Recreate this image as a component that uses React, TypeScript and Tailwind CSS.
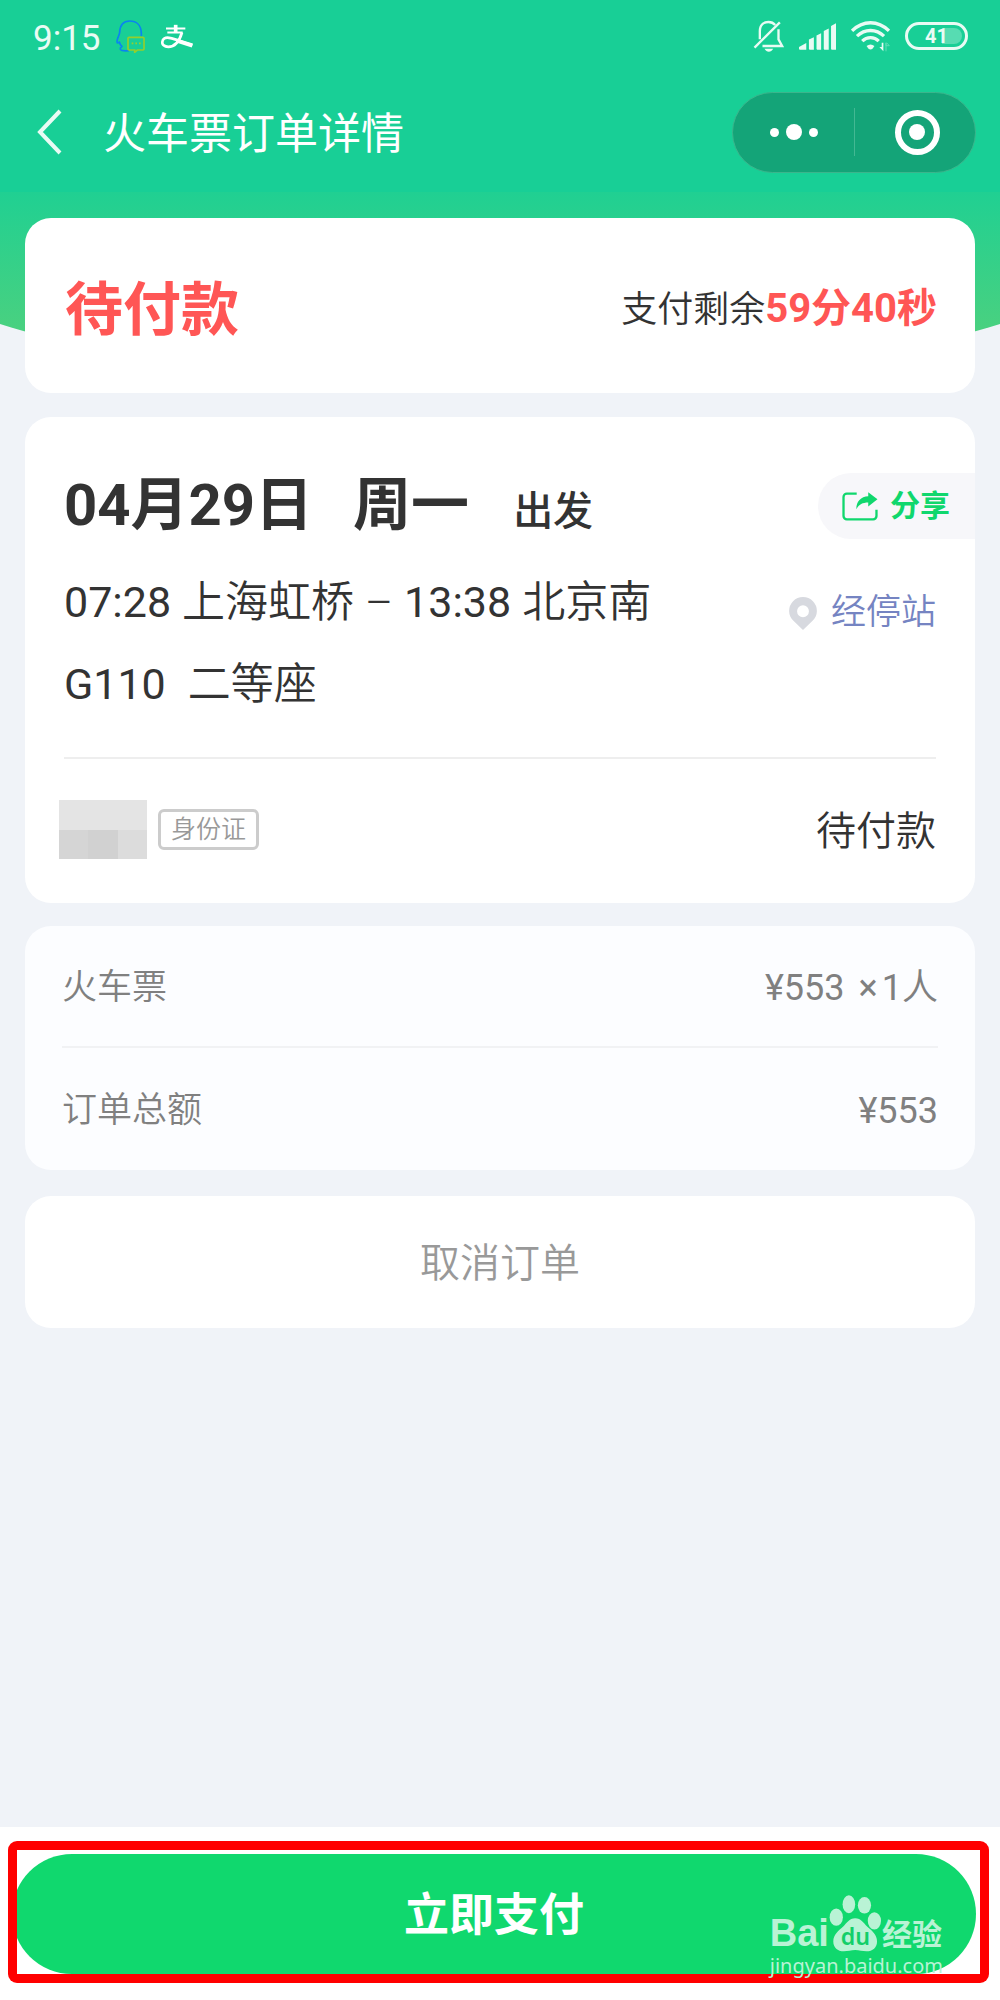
import React from 'react';

const QQIcon: React.FC = () => (
  <svg viewBox="0 0 90 102" className="h-[34px] w-[30px]" fill="none">
    <path
      d="M79 52V42C78 18 64 6 44 6S15 18 14 40c0 8-8 16-8 28 0 5 3 5 7 1 1 6 4 10 8 13-4 3-7 5-5 9 3 5 14 5 26 4"
      stroke="#0a84f0"
      strokeWidth="5"
      strokeLinejoin="round"
    />
    <path
      d="M42 55h42a3 3 0 0 1 3 3v32a3 3 0 0 1-3 3H67l-8 7v-7H42a3 3 0 0 1-3-3V58a3 3 0 0 1 3-3Z"
      fill="#18cf96"
      stroke="#93cf2c"
      strokeWidth="5"
    />
    <path d="M50 73h5M61 73h5M72 73h5" stroke="#93cf2c" strokeWidth="5" />
  </svg>
);

const AlipayIcon: React.FC = () => (
  <svg viewBox="0 0 96 74" className="h-[25px] w-8" fill="none" stroke="#fff">
    <path d="M44 2v24" strokeWidth="11" />
    <path d="M15 13h58M19 25h46" strokeWidth="6" />
    <path d="M63 25C57 45 44 68 22 68 9 68 3 61 4 53c1-9 9-14 20-12 24 4 46 15 70 22" strokeWidth="8" />
    <path d="M52 51 94 64" strokeWidth="12" />
  </svg>
);

const MuteIcon: React.FC = () => (
  <svg viewBox="0 0 92 96" className="h-8 w-[31px]" fill="none" stroke="#e9fbf4" strokeWidth="7">
    <path d="M20 58V34C20 16 31 6 46 6c8 0 15 3 20 9M76 28v30l11 20H28" />
    <path d="M4 83 80 7" />
    <path d="M34 86h26c-3 6-8 9-13 9s-10-3-13-9Z" fill="#e9fbf4" stroke="none" />
  </svg>
);

const SignalIcon: React.FC = () => (
  <svg viewBox="0 0 112 80" className="h-[27px] w-[37px]" fill="#e9fbf4">
    <path d="M0 78v-6l22-12v20H2ZM30 49l15-7v38H32l-2-2ZM53 37l14-7v50H55l-2-2ZM75 23l15-7v64H77l-2-2ZM97 8l15-8v80H99l-2-2Z" />
  </svg>
);

const WifiIcon: React.FC = () => (
  <svg viewBox="0 0 118 94" className="h-[31px] w-[39px]" fill="none" stroke="#e9fbf4" strokeWidth="10">
    <path d="M3 30C36-3 82-3 115 30M18 46c24-23 58-23 82 0M34 61c14-14 36-14 50 0" />
    <path d="M47 76q12-10 24 0l-6 8q-6 5-12 0Z" fill="#e9fbf4" stroke="none" />
    <path d="M98 66v26L86 79h7V66Z" fill="#e9fbf4" stroke="none" />
    <path d="M106 92V66v9h10l-8-9" stroke="#5fdfb6" strokeWidth="3" />
  </svg>
);

const ShareIcon: React.FC = () => (
  <svg viewBox="0 0 108 88" className="h-[29px] w-9" fill="none">
    <path d="M44 5H14a10 10 0 0 0-10 10v58a10 10 0 0 0 10 10h80a10 10 0 0 0 10-10V54" stroke="#10d76d" strokeWidth="7" />
    <path d="M79 1 107 22 79 44V32C62 32 51 38 43 52 42 29 57 14 79 13Z" fill="#10d76d" />
  </svg>
);

const PinIcon: React.FC = () => (
  <svg viewBox="0 0 84 100" className="h-[33px] w-7">
    <path
      d="M42 0a42 42 0 0 1 42 43c0 12-5 21-13 29L42 100 13 72C5 64 0 55 0 43A42 42 0 0 1 42 0Zm0 25a18 18 0 1 0 0 36 18 18 0 0 0 0-36Z"
      fill="#d7d9df"
      fillRule="evenodd"
    />
  </svg>
);

const PawIcon: React.FC = () => (
  <svg viewBox="384 280 158 172" className="h-[57px] w-[53px]" fill="#b9f3d5">
    <ellipse cx="405" cy="347" rx="20" ry="26" />
    <ellipse cx="443" cy="308" rx="19" ry="27" />
    <ellipse cx="490" cy="311" rx="20" ry="25" />
    <ellipse cx="520" cy="358" rx="20" ry="26" />
    <path d="M462 350c18 0 26 15 36 25 16 14 30 25 30 45 0 18-13 30-32 30-12 0-22-4-34-4s-22 4-34 4c-19 0-32-12-32-30 0-20 14-31 30-45 10-10 18-25 36-25Z" />
    <text x="463" y="432" textAnchor="middle" fontSize="70" fontWeight="600" fill="#12cf69">du</text>
  </svg>
);

const StatusBar: React.FC = () => (
  <div className="flex h-[72px] items-center justify-between pl-[33px] pr-8">
    <div className="flex items-center">
      <span className="mr-[14px] pt-1 text-[35px] leading-none text-[#e9fbf4]">9:15</span>
      <QQIcon />
      <span className="ml-4">
        <AlipayIcon />
      </span>
    </div>
    <div className="flex items-center gap-[15px]">
      <MuteIcon />
      <SignalIcon />
      <WifiIcon />
      <span className="relative flex h-7 w-[63px] items-center justify-center rounded-full border-[3px] border-[#e9fbf4]">
        <span className="absolute right-[3px] h-4 w-5 rounded-r-full bg-[#57dcb2]" />
        <span className="relative text-xl font-bold leading-none text-[#e9fbf4]">41</span>
      </span>
    </div>
  </div>
);

const NavBar: React.FC = () => (
  <div className="flex h-[120px] items-center justify-between pl-9 pr-6">
    <div className="flex items-center">
      <button type="button" aria-label="返回">
        <svg viewBox="0 0 28 46" className="h-[46px] w-7" fill="none" stroke="#e9fbf4" strokeWidth="4">
          <path d="M24 2 4 23l20 21" />
        </svg>
      </button>
      <h1 className="ml-[39px] pt-1 text-[43px] leading-none text-white">火车票订单详情</h1>
    </div>
    <div className="flex h-[81px] w-[244px] items-center rounded-full border border-[#3bb58c] bg-[#14a478]">
      <button type="button" aria-label="更多" className="flex w-[121px] items-center justify-center gap-[7px]">
        <span className="size-[9px] rounded-full bg-white" />
        <span className="size-4 rounded-full bg-white" />
        <span className="size-[9px] rounded-full bg-white" />
      </button>
      <span className="h-12 w-px bg-[#43b893]" />
      <button type="button" aria-label="关闭" className="flex flex-1 justify-center pl-1">
        <span className="flex size-[45px] items-center justify-center rounded-full border-[6px] border-white">
          <span className="size-4 rounded-full bg-white" />
        </span>
      </button>
    </div>
  </div>
);

const fees = [
  { label: '火车票', price: '¥553', count: '1' },
  { label: '订单总额', price: '¥553' },
];

const App: React.FC = () => {
  return (
    <div className="flex min-h-screen flex-col bg-[#f0f3f8] font-['Roboto','Noto_Sans_CJK_SC',sans-serif] text-[#333]">
      <header className="bg-[#18cf96]">
        <StatusBar />
        <NavBar />
      </header>

      <main className="relative flex flex-col px-[25px] pt-[26px]">
        <svg
          viewBox="0 0 1000 190"
          preserveAspectRatio="none"
          className="absolute left-0 top-0 h-[190px] w-full"
        >
          <defs>
            <linearGradient id="hero" x1="0" y1="0" x2="0" y2="1">
              <stop offset="0" stopColor="#20d092" />
              <stop offset="1" stopColor="#56d17a" />
            </linearGradient>
          </defs>
          <path d="M0 0H1000V132C800 198 200 198 0 132Z" fill="url(#hero)" />
        </svg>

        <section className="relative flex h-[175px] items-center justify-between rounded-[26px] bg-white pl-10 pr-[38px] pt-2">
          <h2 className="text-[58px] font-bold leading-none text-[#ff5655]">待付款</h2>
          <p className="text-4xl font-[350]">
            支付剩余<span className="text-[40px] font-bold text-[#ff5655]">59分40秒</span>
          </p>
        </section>

        <section className="relative mt-6 rounded-[26px] bg-white pb-11 pl-[39px] pt-14">
          <div className="flex h-[66px] items-center justify-between">
            <div className="flex items-baseline pt-1 text-[58px] font-bold leading-[66px]">
              <span>04月29日</span>
              <span className="ml-10">周一</span>
              <span className="ml-11 text-[40px] font-medium">出发</span>
            </div>
            <button
              type="button"
              className="flex h-[66px] w-[157px] items-center gap-3 rounded-l-full bg-[#f7f7fa] pl-6 text-3xl font-bold text-[#10d76d]"
            >
              <ShareIcon />
              分享
            </button>
          </div>
          <div className="mr-[39px] flex items-start justify-between border-b-2 border-[#eee] pb-8 pt-[22px]">
            <div className="text-[43px] font-[350] leading-[82px]">
              <p className="flex gap-[11px]">
                <span className="font-normal">07:28</span>
                <span>上海虹桥</span>
                <span>–</span>
                <span className="font-normal">13:38</span>
                <span>北京南</span>
              </p>
              <p className="flex gap-[22px]">
                <span className="font-normal">G110</span>
                <span>二等座</span>
              </p>
            </div>
            <a href="#stops" className="mt-6 flex items-center gap-[14px] text-[35px] font-[350] leading-[56px] text-[#7584c2]">
              <PinIcon />
              经停站
            </a>
          </div>
          <div className="mr-[39px] flex items-center justify-between pt-[41px]">
            <div className="-ml-[5px] flex items-center">
              <div className="grid h-[59px] w-[88px] grid-cols-3 grid-rows-2">
                <span className="col-span-3 bg-[#e4e4e4]" />
                <span className="bg-[#d5d5d5]" />
                <span className="bg-[#d1d1d1]" />
                <span className="bg-[#dcdcdc]" />
              </div>
              <span className="ml-[11px] rounded-md border-[3px] border-[#ccc] px-[10px] text-[25px] font-[350] leading-[35px] text-[#999]">
                身份证
              </span>
            </div>
            <span className="pt-1 text-[40px] font-[350] leading-none">待付款</span>
          </div>
        </section>

        <section className="mt-[23px] rounded-[26px] bg-[#fcfdff] px-[37px] text-[35px] font-[350] text-[#808080]">
          <dl className="divide-y-2 divide-[#f1f2f4]">
            {fees.map((fee) => (
              <div key={fee.label} className="flex h-[122px] items-center justify-between pt-1">
                <dt>{fee.label}</dt>
                <dd className="flex text-4xl">
                  <span className="font-normal">{fee.price}</span>
                  {fee.count && (
                    <>
                      <span className="ml-[14px] mr-1 font-normal">×</span>
                      <span className="font-normal">{fee.count}</span>
                      <span>人</span>
                    </>
                  )}
                </dd>
              </div>
            ))}
          </dl>
        </section>

        <button
          type="button"
          className="mt-[26px] h-[132px] rounded-[26px] bg-white pt-1 text-[40px] font-[350] text-[#999]"
        >
          取消订单
        </button>
      </main>

      <footer className="relative mt-auto bg-white pb-[17px] pl-2 pr-[11px] pt-[14px]">
        <div className="rounded-[9px] bg-[#f00] p-[9px]">
          <div className="overflow-hidden bg-white pt-1">
            <button
              type="button"
              className="-ml-[5px] block h-[120px] w-[calc(100%+1px)] rounded-full bg-[#10d86e] pt-1 text-[45px] font-bold text-white"
            >
              立即支付
            </button>
          </div>
        </div>
        <div className="absolute bottom-5 right-[57px] font-['Noto_Sans','Noto_Sans_CJK_SC',sans-serif] text-[#b9f3d5]">
          <div className="flex items-end">
            <span className="font-['Liberation_Sans'] text-[38px] font-bold leading-[38px]">Bai</span>
            <PawIcon />
            <span className="text-3xl font-bold leading-9">经验</span>
          </div>
          <div className="text-xl leading-7">jingyan.baidu.com</div>
        </div>
      </footer>
    </div>
  );
};

export default App;
